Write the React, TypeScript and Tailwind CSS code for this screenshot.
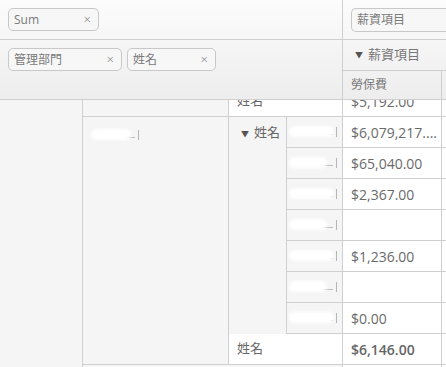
import React from "react";

const line = "border-[#cfcfcf]";

const Chip = ({ label, width }: { label: string; width: string }) => (
  <div
    className={`${width} h-[23px] flex items-center justify-between pl-[5px] pr-[7px] rounded-[5px] border border-[#c8c8c8] bg-[#f7f7f7] text-[12px] text-[#7a7a7a]`}
  >
    <span>{label}</span>
    <span className="text-[13px] font-light leading-none text-[#777]">×</span>
  </div>
);

// 遮蔽的姓名
const Masked = ({ w = "w-[42px]" }: { w?: string }) => (
  <div className="relative h-[14px] w-[48px]">
    <div className="absolute left-[6px] top-[9px] w-[38px] h-px bg-[#9a9a9a] opacity-60" />
    <div className="absolute right-0 top-[2px] w-[4px] h-[10px] border-r border-[#8a8a8a] opacity-60" />
    <div className={`absolute left-0 top-[1px] ${w} h-[11px] rounded-full bg-white blur-[1.5px]`} />
  </div>
);

const Tri = () => <span className="text-[8px] text-[#555] mr-[5px]">▼</span>;

const names = [0, 1, 2, 3, 4, 5, 6];
const values = ["$6,079,217....", "$65,040.00", "$2,367.00", "", "$1,236.00", "", "$0.00"];

export default function App() {
  return (
    <div
      className="w-[446px] h-[367px] overflow-hidden bg-white text-[#666]"
      style={{ fontFamily: '"Open Sans", "Noto Sans CJK TC", sans-serif' }}
    >
      {/* 表頭 */}
      <div className="flex bg-gradient-to-b from-[#fcfcfc] to-[#ededed]">
        <div className={`w-[343px] shrink-0 border-r ${line}`}>
          <div className={`h-[40px] border-b ${line} pt-[8px] pl-[8px]`}>
            <Chip label="Sum" width="w-[91px]" />
          </div>
          <div className={`h-[60px] border-b ${line} pt-[8px] pl-[8px] flex gap-[5px]`}>
            <Chip label="管理部門" width="w-[114px]" />
            <Chip label="姓名" width="w-[89px]" />
          </div>
        </div>
        <div className="flex-1 min-w-0">
          <div className={`h-[40px] border-b ${line} pt-[8px] pl-[8px]`}>
            <div className="w-[120px] h-[24px] flex items-center pl-[5px] rounded-l-[5px] border border-r-0 border-[#c8c8c8] bg-[#f7f7f7] text-[12px] text-[#7a7a7a]">
              薪資項目
            </div>
          </div>
          <div className={`h-[60px] border-b ${line}`}>
            <div className={`h-[31px] border-b ${line} flex items-center pl-[12px] text-[13px] text-[#777]`}>
              <Tri />
              薪資項目
            </div>
            <div className="h-[28px] flex">
              <div className={`w-[99px] border-r ${line} flex items-center pl-[8px] text-[12px] text-[#777]`}>
                勞保費
              </div>
            </div>
          </div>
        </div>
      </div>

      {/* 內容 */}
      <div className="h-[267px] overflow-hidden">
        <div className="flex -mt-[14px]">
          <div className={`w-[343px] shrink-0 border-r ${line} flex bg-[#f5f5f5]`}>
            <div className={`w-[83px] shrink-0 border-r ${line}`} />
            <div className="flex-1">
              <div className={`h-[31px] border-b ${line} flex`}>
                <div className={`w-[146px] border-r ${line}`} />
                <div className="flex-1 bg-white flex items-center pl-[8px] text-[13px] text-[#666]">
                  姓名
                </div>
              </div>
              <div className={`flex border-b ${line}`}>
                <div className={`w-[146px] shrink-0 border-r ${line} pt-[11px] pl-[8px]`}>
                  <Masked w="w-[40px]" />
                </div>
                <div className="flex-1 flex flex-col">
                  <div className="flex">
                    <div className={`w-[58px] shrink-0 border-r ${line} pt-[6px] pl-[12px] text-[13px] text-[#666]`}>
                      <Tri />
                      姓名
                    </div>
                    <div className="flex-1">
                      {names.map((n) => (
                        <div key={n} className={`h-[31px] border-b ${line} flex items-center pl-[2px]`}>
                          <Masked w={n % 2 ? "w-[38px]" : "w-[45px]"} />
                        </div>
                      ))}
                    </div>
                  </div>
                  <div className="h-[30px] bg-white flex items-center pl-[8px] text-[13px] text-[#666]">
                    姓名
                  </div>
                </div>
              </div>
              <div className="h-[31px]" />
            </div>
          </div>
          <div className="flex-1 min-w-0 flex">
            <div className={`w-[99px] shrink-0 border-r ${line}`}>
              <div className={`h-[31px] border-b ${line} flex items-center pl-[8px] text-[14px] text-[#6a6a6a]`}>
                $5,192.00
              </div>
              {values.map((v, i) => (
                <div
                  key={i}
                  className={`h-[31px] border-b ${line} flex items-center pl-[8px] text-[14px] text-[#6a6a6a] whitespace-nowrap overflow-hidden`}
                >
                  {v}
                </div>
              ))}
              <div className={`h-[31px] border-b ${line} flex items-center pl-[8px] text-[14px] font-semibold text-[#666]`}>
                $6,146.00
              </div>
              <div className="h-[31px]" />
            </div>
            <div className="flex-1">
              {Array.from({ length: 10 }).map((_, i) => (
                <div key={i} className={`h-[31px] border-b ${line}`} />
              ))}
            </div>
          </div>
        </div>
      </div>
    </div>
  );
}
